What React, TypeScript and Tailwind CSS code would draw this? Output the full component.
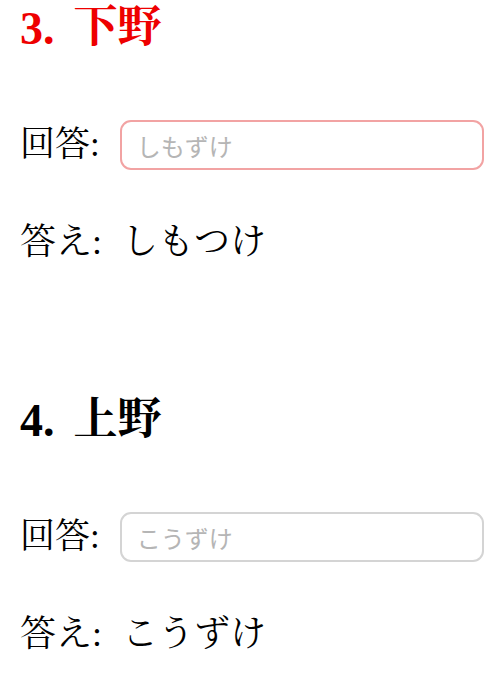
import React from "react";

const serif = { fontFamily: '"Liberation Serif", "Noto Serif CJK JP", "Noto Sans CJK JP", serif' };

function Section({ num, title, placeholder, answer, red }: { num: string; title: string; placeholder: string; answer: string; red?: boolean }) {
  return (
    <section className="px-[20px]">
      <h2 className={`m-0 flex items-center h-[56px] font-bold whitespace-nowrap ${red ? "text-[#ee0000]" : "text-black"}`} style={serif}>
        <span className="text-[46px]">{num}.</span>
        <span className="ml-[19px] text-[44px]">{title}</span>
      </h2>
      <div className="mt-[64px] flex items-center">
        <span className="shrink-0 whitespace-nowrap text-[35px] leading-[50px] text-black" style={serif}>回答:</span>
        <input
          placeholder={placeholder}
          className={`ml-[20px] h-[50px] w-[364px] min-w-0 shrink-0 rounded-[11px] border-2 bg-white px-[15px] text-[24px] outline-none placeholder:text-[#b5b5b5] ${red ? "border-[#f2a3a3]" : "border-[#d4d4d4]"}`}
          style={{ fontFamily: '"Noto Sans CJK JP", sans-serif' }}
        />
      </div>
      <p className="m-0 mt-[47px] flex items-center whitespace-nowrap text-[36px] leading-[50px] text-black" style={serif}>
        <span>答え:</span>
        <span className="ml-[20px]">{answer}</span>
      </p>
    </section>
  );
}

export default function App() {
  return (
    <div className="bg-white w-[500px] min-h-[678px] overflow-hidden">
      <Section num="3" title="下野" placeholder="しもずけ" answer="しもつけ" red />
      <div className="h-[125px]" />
      <Section num="4" title="上野" placeholder="こうずけ" answer="こうずけ" />
    </div>
  );
}
